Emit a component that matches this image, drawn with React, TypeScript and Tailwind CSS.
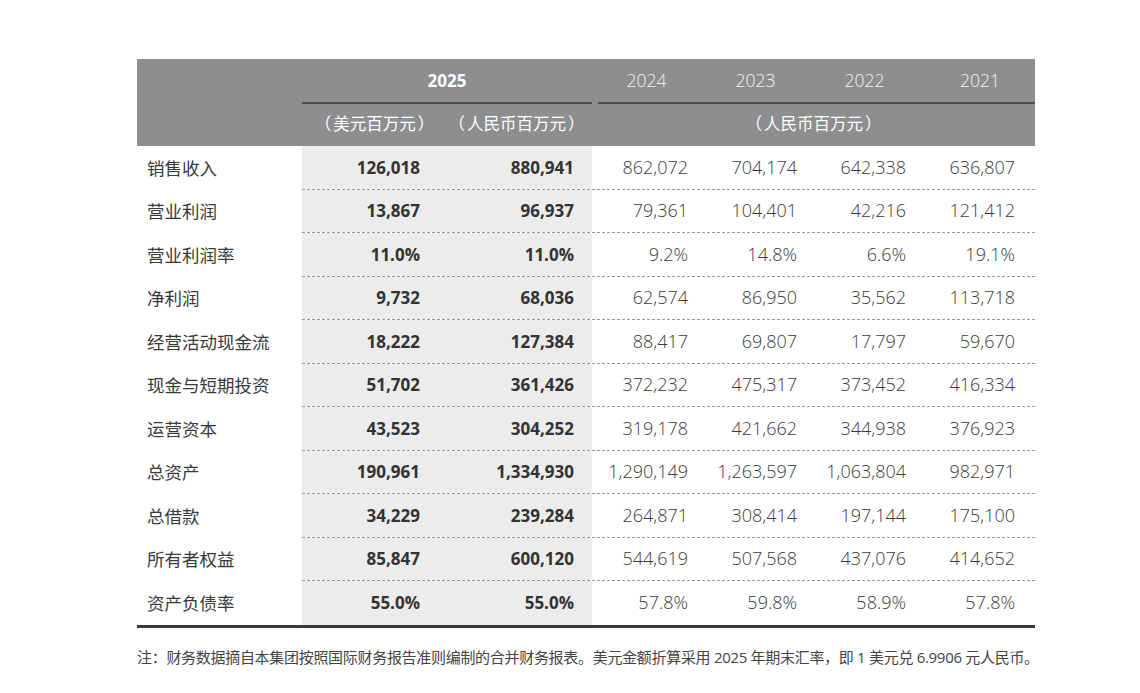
const rows: [string, string, string, string, string, string, string][] = [
  ["销售收入", "126,018", "880,941", "862,072", "704,174", "642,338", "636,807"],
  ["营业利润", "13,867", "96,937", "79,361", "104,401", "42,216", "121,412"],
  ["营业利润率", "11.0%", "11.0%", "9.2%", "14.8%", "6.6%", "19.1%"],
  ["净利润", "9,732", "68,036", "62,574", "86,950", "35,562", "113,718"],
  ["经营活动现金流", "18,222", "127,384", "88,417", "69,807", "17,797", "59,670"],
  ["现金与短期投资", "51,702", "361,426", "372,232", "475,317", "373,452", "416,334"],
  ["运营资本", "43,523", "304,252", "319,178", "421,662", "344,938", "376,923"],
  ["总资产", "190,961", "1,334,930", "1,290,149", "1,263,597", "1,063,804", "982,971"],
  ["总借款", "34,229", "239,284", "264,871", "308,414", "197,144", "175,100"],
  ["所有者权益", "85,847", "600,120", "544,619", "507,568", "437,076", "414,652"],
  ["资产负债率", "55.0%", "55.0%", "57.8%", "59.8%", "58.9%", "57.8%"],
];

const cols = "grid grid-cols-[165px_145px_145px_109px_109px_109px_116px]";

function Unit({ text }: { text: string }) {
  return (
    <span className="inline-flex items-center">
      <span className="inline-block w-[1em] text-right">（</span>
      <span className="px-[2px]">{text}</span>
      <span className="inline-block w-[1em] text-left">）</span>
    </span>
  );
}

export default function App() {
  return (
    <div
      className="w-[1140px] h-[693px] bg-white pt-[59px] pl-[137px] text-[#3a3a3a]"
      style={{ fontFamily: '"Open Sans", "Noto Sans CJK SC", sans-serif' }}
    >
      <div className="w-[898px]">
        {/* header */}
        <div className="bg-[#8d8e90] text-white">
          <div className={`${cols} h-[43px] items-center`}>
            <div />
            <div className="col-span-2 text-center text-[17px] font-bold">2025</div>
            <div className="text-center text-[17.5px] font-light text-[#f2f2f2]">2024</div>
            <div className="text-center text-[17.5px] font-light text-[#f2f2f2]">2023</div>
            <div className="text-center text-[17.5px] font-light text-[#f2f2f2]">2022</div>
            <div className="text-center text-[17.5px] font-light text-[#f2f2f2] pl-[6px]">2021</div>
          </div>
          <div className={cols}>
            <div />
            <div className="col-span-2">
              <div className="h-[1.5px] bg-[#4d4d4f]" />
            </div>
            <div className="col-span-4 pl-[6px]">
              <div className="h-[1.5px] bg-[#4d4d4f]" />
            </div>
          </div>
          <div className={`${cols} h-[42.5px] items-center text-[16.5px]`}>
            <div />
            <div className="text-center">
              <Unit text="美元百万元" />
            </div>
            <div className="text-center pr-[6px]">
              <Unit text="人民币百万元" />
            </div>
            <div className="col-span-4 text-center">
              <Unit text="人民币百万元" />
            </div>
          </div>
        </div>

        {/* body */}
        <div className="border-b-[3px] border-[#3a3a3a]">
          {rows.map((r, i) => (
            <div key={r[0]} className={`${cols} h-[43.5px]`}>
              <div className="flex items-center pl-[10px] text-[17.5px] text-[#3a3a3a]">{r[0]}</div>
              <div
                className={`col-span-6 grid grid-cols-[145px_145px_109px_109px_109px_116px] ${
                  i < rows.length - 1 ? "border-b border-dashed border-[#9a9a9a]" : ""
                }`}
              >
                <div className="bg-[#ececec] flex items-center justify-end pr-[27px] text-[17px] font-bold text-[#333]">
                  {r[1]}
                </div>
                <div className="bg-[#ececec] flex items-center justify-end pr-[18px] text-[17px] font-bold text-[#333]">
                  {r[2]}
                </div>
                {r.slice(3).map((v, j) => (
                  <div
                    key={j}
                    className={`flex items-center justify-end text-[18px] font-light text-[#3a3a3a] ${
                      j === 3 ? "pr-[20px]" : "pr-[13px]"
                    }`}
                  >
                    {v}
                  </div>
                ))}
              </div>
            </div>
          ))}
        </div>

        <div className="mt-[18px] text-[15px] text-[#444] whitespace-nowrap tracking-[-0.3px]">
          注：财务数据摘自本集团按照国际财务报告准则编制的合并财务报表。美元金额折算采用 2025 年期末汇率，即 1 美元兑 6.9906 元人民币。
        </div>
      </div>
    </div>
  );
}
